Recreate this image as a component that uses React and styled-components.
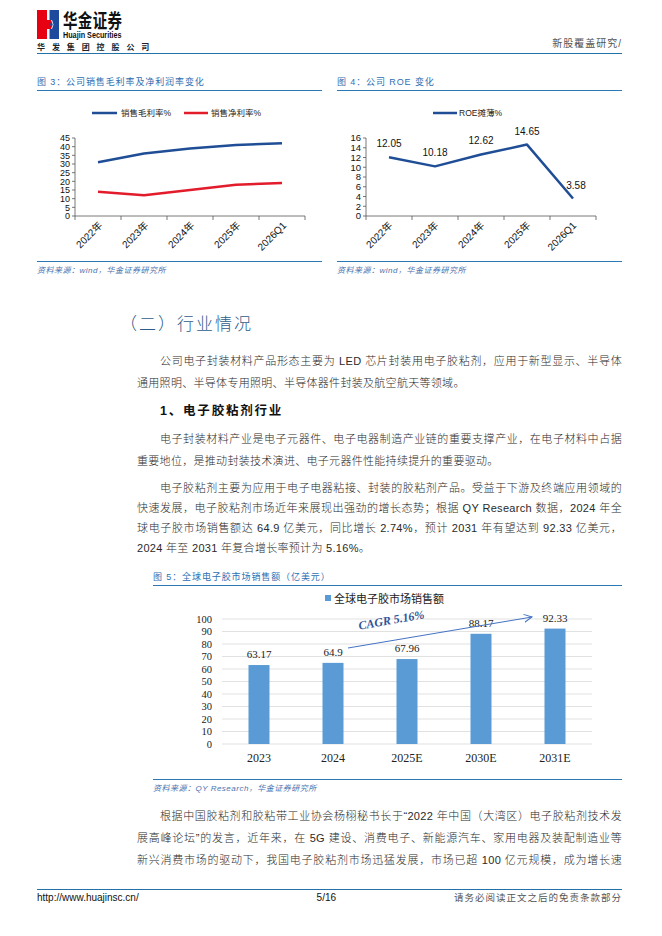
import React from "react";
import styled, { createGlobalStyle } from "styled-components";

const GlobalStyle = createGlobalStyle`
  body {
    margin: 0;
    background: #fff;
  }
`;

const FONT = `"Liberation Sans", "Noto Sans CJK SC", sans-serif`;
const SERIF = `"Liberation Serif", "Noto Sans CJK SC", serif`;

const Page = styled.div`
  width: 662px;
  height: 936px;
  box-sizing: border-box;
  padding: 0 40px 0 37px;
  background: #fff;
  font-family: ${FONT};
  color: #333;
  overflow: hidden;
`;

const Header = styled.header`
  display: flex;
  justify-content: space-between;
  align-items: flex-end;
  height: 54px;
  box-sizing: border-box;
  padding-top: 8px;
  border-bottom: 1.5px solid #2271a9;
`;

const Logo = styled.div`
  display: flex;
  flex-direction: column;
`;

const LogoTop = styled.div`
  display: flex;
  gap: 4px;
  height: 29px;
`;

const LogoText = styled.div`
  display: flex;
  flex-direction: column;
  transform: scaleX(0.76);
  transform-origin: left top;
  color: #111;
  font-weight: bold;
`;

const LogoCn = styled.span`
  font-family: "Noto Sans CJK SC", sans-serif;
  font-size: 19px;
  line-height: 20px;
  letter-spacing: 0.5px;
`;

const LogoEn = styled.span`
  font-size: 9.5px;
  line-height: 9px;
`;

const LogoSub = styled.div`
  margin-top: 4px;
  font-size: 8px;
  line-height: 10px;
  font-weight: bold;
  letter-spacing: 6.9px;
  color: #222;
`;

const HeaderTag = styled.div`
  font-size: 10px;
  line-height: 12px;
  letter-spacing: 1px;
  color: #555;
  padding-bottom: 3px;
`;

const FigRow = styled.div`
  display: grid;
  grid-template-columns: 1fr 1fr;
  column-gap: 15px;
  margin-top: 22px;
`;

const Figure = styled.div`
  display: flex;
  flex-direction: column;
  margin: ${(p) => p.$top || 0}px 0 0 ${(p) => p.$indent || 0}px;
`;

const FigTitle = styled.div`
  font-size: 9px;
  line-height: 12px;
  letter-spacing: 0.9px;
  color: #2f6fb3;
  padding-bottom: 2px;
  border-bottom: 1.5px solid #2c78b4;
`;

const ChartSvg = styled.svg`
  display: block;
  width: 100%;
`;

const Source = styled.div`
  border-top: 1.5px solid #2c78b4;
  padding-top: 3px;
  font-size: 8px;
  line-height: 12px;
  font-style: italic;
  letter-spacing: 0.5px;
  color: #4a74b0;
`;

const Heading = styled.h2`
  margin: 36px 0 0 83px;
  font-size: 17px;
  line-height: 24px;
  font-weight: 300;
  letter-spacing: 2px;
  color: #2e5c8a;
`;

const SubHeading = styled.h3`
  margin: 6px 0 0 123px;
  font-size: 12.5px;
  line-height: 22px;
  font-weight: bold;
  letter-spacing: 1.8px;
  color: #111;
`;

const Para = styled.div`
  margin: ${(p) => p.$top || 6}px 0 0 100px;
  font-size: 11px;
  font-weight: 300;
  letter-spacing: 0.3px;
  line-height: ${(p) => p.$lh || 22}px;
  color: #2a2a2a;
`;

const Line = styled.span`
  display: block;
  white-space: nowrap;
  text-align: justify;
  text-align-last: ${(p) => (p.$last ? "left" : "justify")};
  padding-left: ${(p) => (p.$first ? 23 : 0)}px;
`;

const Footer = styled.footer`
  display: flex;
  justify-content: space-between;
  align-items: center;
  margin-top: 18px;
  border-top: 1.5px solid #2271a9;
  padding-top: 1px;
  font-size: 10px;
  line-height: 14px;
  color: #111;
`;

const FooterNote = styled.span`
  font-size: 9.5px;
  letter-spacing: 1px;
  color: #555;
`;

const PageNo = styled.span`
  margin-left: 60px;
`;

function TextLines({ lines, open }) {
  return lines.map((t, i) => (
    <Line
      key={i}
      $first={i === 0 && t.startsWith("\t")}
      $last={!open && i === lines.length - 1}
    >
      {t.replace("\t", "")}
    </Line>
  ));
}

function LogoMark() {
  return (
    <svg width="22" height="29" viewBox="0 0 22 29">
      <rect x="0" y="0" width="10" height="29" fill="#e60012" />
      <rect x="12.5" y="0" width="9.5" height="29" fill="#1d4a9c" />
      <polygon points="10,10 15,10 13,14.5 15,19 10,19" fill="#e60012" />
      <polygon points="15,10 16.5,14.5 15,19 14,19 15.8,14.5 14,10" fill="#fff" />
    </svg>
  );
}

const years = ["2022年", "2023年", "2024年", "2025年", "2026Q1"];

function Axis({ x0, x1, base, top, step, max, lab, yFont }) {
  const ticks = [];
  for (let v = 0; v <= max; v += step) ticks.push(v);
  const sy = (v) => base - ((base - top) * v) / max;
  const n = 5;
  const w = (x1 - x0) / n;
  return (
    <g fontFamily={FONT} fontSize="10" fill="#111">
      <line x1={x0} y1={top} x2={x0} y2={base} stroke="#555" strokeWidth="0.8" />
      <line x1={x0} y1={base} x2={x1} y2={base} stroke="#555" strokeWidth="0.8" />
      {ticks.map((v) => (
        <g key={v}>
          <line x1={x0 - 3} x2={x0} y1={sy(v)} y2={sy(v)} stroke="#555" strokeWidth="0.8" />
          <text x={x0 - 5} y={sy(v) + 3.3} textAnchor="end" fontSize={yFont}>
            {v}
          </text>
        </g>
      ))}
      {Array.from({ length: n + 1 }).map((_, i) => (
        <line key={i} x1={x0 + i * w} x2={x0 + i * w} y1={base} y2={base + 4} stroke="#555" strokeWidth="0.8" />
      ))}
      {years.map((t, i) => {
        const cx = x0 + w * i + w / 2 + lab;
        return (
          <text key={t} x={cx} y={base + 10} textAnchor="end" transform={`rotate(-45 ${cx} ${base + 10})`}>
            {t}
          </text>
        );
      })}
    </g>
  );
}

function MarginChart() {
  const xs = [61, 107, 153, 199, 245];
  const y = (v) => 125 - (v * 78) / 45;
  const gross = [31, 36, 39, 41, 42];
  const net = [14, 12, 15, 18, 19];
  const pts = (arr) => arr.map((v, i) => `${xs[i]},${y(v)}`).join(" ");
  return (
    <ChartSvg height="170" viewBox="0 0 285 170">
      <g fontFamily={FONT} fontSize="8.5" fill="#222">
        <line x1="55" x2="80" y1="22" y2="22" stroke="#1f4e96" strokeWidth="2.5" />
        <text x="84" y="25">销售毛利率%</text>
        <line x1="147" x2="171" y1="22" y2="22" stroke="#e31c2b" strokeWidth="2.5" />
        <text x="174" y="25">销售净利率%</text>
      </g>
      <Axis x0={38} x1={268} base={125} top={47} step={5} max={45} lab={5} yFont={9} />
      <polyline points={pts(gross)} fill="none" stroke="#1f4e96" strokeWidth="2.5" strokeLinejoin="round" />
      <polyline points={pts(net)} fill="none" stroke="#e31c2b" strokeWidth="2.5" strokeLinejoin="round" />
    </ChartSvg>
  );
}

function RoeChart() {
  const xs = [52, 98, 144, 190, 236];
  const y = (v) => 125 - (v * 78) / 16;
  const roe = [12.05, 10.18, 12.62, 14.65, 3.58];
  return (
    <ChartSvg height="170" viewBox="0 0 285 170">
      <g fontFamily={FONT} fontSize="8.5" fill="#222">
        <line x1="96" x2="120" y1="22" y2="22" stroke="#1f4e96" strokeWidth="2.5" />
        <text x="122" y="25">ROE摊薄%</text>
      </g>
      <Axis x0={29} x1={259} base={125} top={47} step={2} max={16} lab={4} yFont={9.5} />
      <polyline
        points={roe.map((v, i) => `${xs[i]},${y(v)}`).join(" ")}
        fill="none"
        stroke="#1f4e96"
        strokeWidth="2.5"
        strokeLinejoin="round"
      />
      <g fontFamily={FONT} fontSize="10" fill="#111" textAnchor="middle">
        {roe.map((v, i) => (
          <text key={i} x={xs[i] + (i === 4 ? 3 : 0)} y={y(v) - 10}>
            {v.toFixed(2)}
          </text>
        ))}
      </g>
    </ChartSvg>
  );
}

function MarketChart() {
  const cats = ["2023", "2024", "2025E", "2030E", "2031E"];
  const vals = [63.17, 64.9, 67.96, 88.17, 92.33];
  const labels = ["63.17", "64.9", "67.96", "88.17", "92.33"];
  const y = (v) => 158 - v * 1.25;
  const cx = (i) => 106 + i * 74;
  const grid = [0, 10, 20, 30, 40, 50, 60, 70, 80, 90, 100];
  return (
    <ChartSvg height="193" viewBox="0 0 469 193">
      <defs>
        <marker id="arrowHead" markerWidth="10" markerHeight="10" refX="8" refY="5" orient="auto" markerUnits="userSpaceOnUse">
          <path d="M0,1 L8,5 L0,9" fill="none" stroke="#4472c4" strokeWidth="1" />
        </marker>
      </defs>
      <rect x="172" y="9" width="6" height="6" fill="#5b9bd5" />
      <text x="181" y="17" fontFamily={`"Noto Sans CJK SC", sans-serif`} fontSize="11" fill="#222">
        全球电子胶市场销售额
      </text>
      <g fontFamily={SERIF} fontSize="10.5" fill="#222">
        {grid.map((v) => (
          <g key={v}>
            <line x1="69" x2="439" y1={y(v)} y2={y(v)} stroke="#d9d9d9" strokeWidth="0.8" />
            <text x="59" y={y(v) + 3.5} textAnchor="end">
              {v}
            </text>
          </g>
        ))}
      </g>
      {vals.map((v, i) => (
        <rect key={i} x={cx(i) - 10.5} y={y(v)} width="21" height={v * 1.25} fill="#5b9bd5" />
      ))}
      <g fontFamily={SERIF} fontSize="11" fill="#222" textAnchor="middle">
        {labels.map((t, i) => (
          <text key={t} x={cx(i)} y={y(vals[i]) - 7}>
            {t}
          </text>
        ))}
        {cats.map((t, i) => (
          <text key={t} x={cx(i)} y="176" fontSize="12">
            {t}
          </text>
        ))}
      </g>
      <line x1="195" y1="62" x2="379" y2="31" stroke="#4472c4" strokeWidth="1" markerEnd="url(#arrowHead)" />
      <text
        x="239"
        y="38"
        textAnchor="middle"
        fontFamily={SERIF}
        fontSize="12"
        fontWeight="bold"
        fontStyle="italic"
        fill="#2f5597"
        transform="rotate(-10 239 38)"
      >
        CAGR 5.16%
      </text>
    </ChartSvg>
  );
}

const para1 = [
  "\t公司电子封装材料产品形态主要为 LED 芯片封装用电子胶粘剂，应用于新型显示、半导体",
  "通用照明、半导体专用照明、半导体器件封装及航空航天等领域。",
];

const para2 = [
  "\t电子封装材料产业是电子元器件、电子电器制造产业链的重要支撑产业，在电子材料中占据",
  "重要地位，是推动封装技术演进、电子元器件性能持续提升的重要驱动。",
];

const para3 = [
  "\t电子胶粘剂主要为应用于电子电器粘接、封装的胶粘剂产品。受益于下游及终端应用领域的",
  "快速发展，电子胶粘剂市场近年来展现出强劲的增长态势；根据 QY Research 数据，2024 年全",
  "球电子胶市场销售额达 64.9 亿美元，同比增长 2.74%，预计 2031 年有望达到 92.33 亿美元，",
  "2024 年至 2031 年复合增长率预计为 5.16%。",
];

const para4 = [
  "\t根据中国胶粘剂和胶粘带工业协会杨栩秘书长于“2022 年中国（大湾区）电子胶粘剂技术发",
  "展高峰论坛”的发言，近年来，在 5G 建设、消费电子、新能源汽车、家用电器及装配制造业等",
  "新兴消费市场的驱动下，我国电子胶粘剂市场迅猛发展，市场已超 100 亿元规模，成为增长速",
];

export default function App() {
  return (
    <>
      <GlobalStyle />
      <Page>
        <Header>
          <Logo>
            <LogoTop>
              <LogoMark />
              <LogoText>
                <LogoCn>华金证券</LogoCn>
                <LogoEn>Huajin Securities</LogoEn>
              </LogoText>
            </LogoTop>
            <LogoSub>华发集团控股公司</LogoSub>
          </Logo>
          <HeaderTag>新股覆盖研究/</HeaderTag>
        </Header>

        <FigRow>
          <Figure>
            <FigTitle>图 3：公司销售毛利率及净利润率变化</FigTitle>
            <MarginChart />
            <Source>资料来源：wind，华金证券研究所</Source>
          </Figure>
          <Figure>
            <FigTitle>图 4：公司 ROE 变化</FigTitle>
            <RoeChart />
            <Source>资料来源：wind，华金证券研究所</Source>
          </Figure>
        </FigRow>

        <Heading>（二）行业情况</Heading>
        <Para $top={13}>
          <TextLines lines={para1} />
        </Para>
        <SubHeading>1、电子胶粘剂行业</SubHeading>
        <Para>
          <TextLines lines={para2} />
        </Para>
        <Para $lh={20}>
          <TextLines lines={para3} />
        </Para>

        <Figure $indent={116} $top={13}>
          <FigTitle>图 5：全球电子胶市场销售额（亿美元）</FigTitle>
          <MarketChart />
          <Source>资料来源：QY Research，华金证券研究所</Source>
        </Figure>

        <Para $top={10}>
          <TextLines lines={para4} open />
        </Para>

        <Footer>
          <span>http://www.huajinsc.cn/</span>
          <PageNo>5/16</PageNo>
          <FooterNote>请务必阅读正文之后的免责条款部分</FooterNote>
        </Footer>
      </Page>
    </>
  );
}
